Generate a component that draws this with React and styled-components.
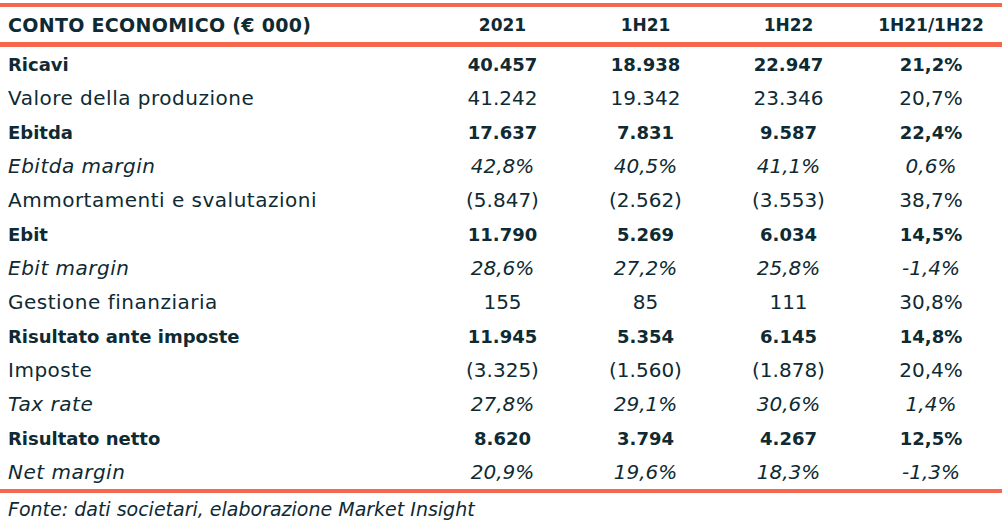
import styled, { createGlobalStyle } from "styled-components";

const rows = [
  { label: "Ricavi", values: ["40.457", "18.938", "22.947", "21,2%"], kind: "bold" },
  { label: "Valore della produzione", values: ["41.242", "19.342", "23.346", "20,7%"] },
  { label: "Ebitda", values: ["17.637", "7.831", "9.587", "22,4%"], kind: "bold" },
  { label: "Ebitda margin", values: ["42,8%", "40,5%", "41,1%", "0,6%"], kind: "italic" },
  { label: "Ammortamenti e svalutazioni", values: ["(5.847)", "(2.562)", "(3.553)", "38,7%"] },
  { label: "Ebit", values: ["11.790", "5.269", "6.034", "14,5%"], kind: "bold" },
  { label: "Ebit margin", values: ["28,6%", "27,2%", "25,8%", "-1,4%"], kind: "italic" },
  { label: "Gestione finanziaria", values: ["155", "85", "111", "30,8%"] },
  { label: "Risultato ante imposte", values: ["11.945", "5.354", "6.145", "14,8%"], kind: "bold" },
  { label: "Imposte", values: ["(3.325)", "(1.560)", "(1.878)", "20,4%"] },
  { label: "Tax rate", values: ["27,8%", "29,1%", "30,6%", "1,4%"], kind: "italic" },
  { label: "Risultato netto", values: ["8.620", "3.794", "4.267", "12,5%"], kind: "bold" },
  { label: "Net margin", values: ["20,9%", "19,6%", "18,3%", "-1,3%"], kind: "italic" },
];

const GlobalStyle = createGlobalStyle`
  body {
    margin: 0;
    background: #ffffff;
    font-family: "DejaVu Sans", "Liberation Sans", sans-serif;
    color: #0e2a33;
  }
`;

function App() {
  return (
    <>
      <GlobalStyle />
      <Wrapper>
        <Table>
          <HeaderRow>
            <HeaderTitle>CONTO ECONOMICO (€ 000)</HeaderTitle>
            <Cell>2021</Cell>
            <Cell>1H21</Cell>
            <Cell>1H22</Cell>
            <Cell>1H21/1H22</Cell>
          </HeaderRow>
          {rows.map((r) => (
            <Row key={r.label} $kind={r.kind}>
              <Label $kind={r.kind}>{r.label}</Label>
              {r.values.map((v, i) => (
                <Cell key={i}>{v}</Cell>
              ))}
            </Row>
          ))}
        </Table>
        <Source>Fonte: dati societari, elaborazione Market Insight</Source>
      </Wrapper>
    </>
  );
}

const Wrapper = styled.div`
  width: 1002px;
  padding-top: 3px;
`;

const Table = styled.div`
  border-top: 4px solid #f5684e;
  border-bottom: 4px solid #f5684e;
`;

const Row = styled.div`
  display: grid;
  grid-template-columns: 431px 143px 143px 143px 142px;
  height: 34px;
  align-items: center;
  font-size: ${(p) => (p.$kind === "bold" ? "18px" : "20px")};
  font-weight: ${(p) => (p.$kind === "bold" ? 700 : 400)};
  font-style: ${(p) => (p.$kind === "italic" ? "italic" : "normal")};
`;

const HeaderRow = styled(Row)`
  height: 35px;
  font-size: 17px;
  font-weight: 700;
  border-bottom: 5px solid #f5684e;
`;

const Cell = styled.div`
  text-align: center;
  white-space: nowrap;
`;

const Label = styled.div`
  padding-left: 8px;
  white-space: nowrap;
  letter-spacing: ${(p) => (p.$kind === "bold" ? "0" : "0.5px")};
`;

const HeaderTitle = styled.div`
  padding-left: 8px;
  white-space: nowrap;
  font-size: 19px;
  letter-spacing: 0.3px;
`;

const Source = styled.div`
  padding: 5px 8px 0;
  font-size: 19px;
  font-style: italic;
`;

export default App;
